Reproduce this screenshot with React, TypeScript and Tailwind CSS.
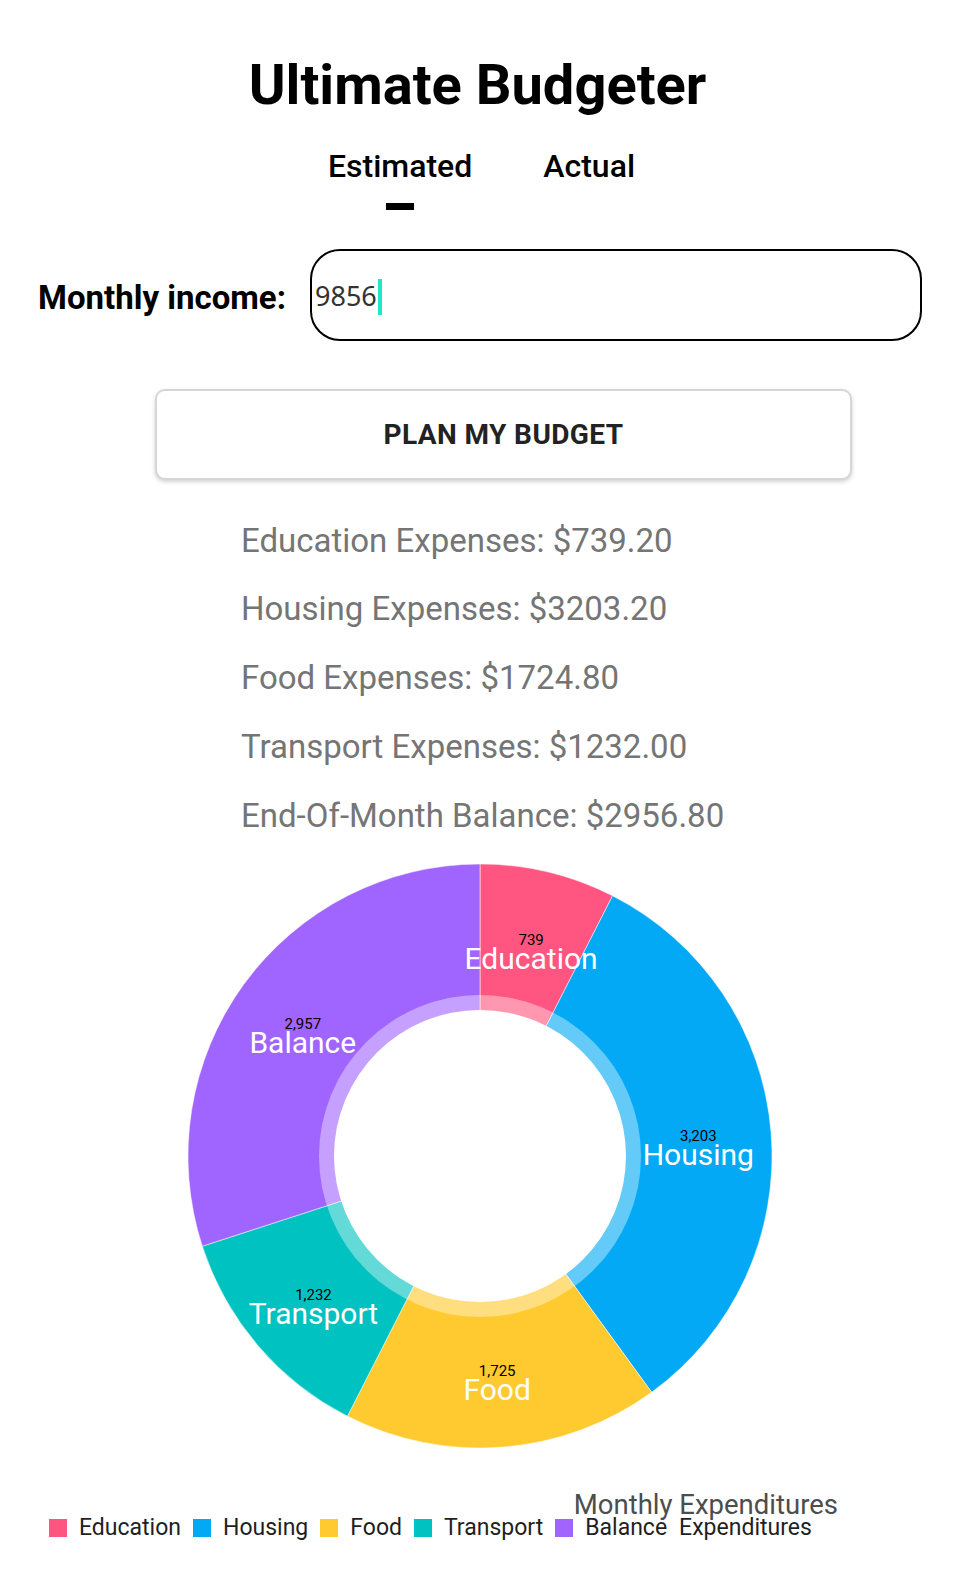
import { useState } from "react";

const SLICES = [
  { label: "Education", value: 739.2, color: "#ff5580" },
  { label: "Housing", value: 3203.2, color: "#03a9f4" },
  { label: "Food", value: 1724.8, color: "#ffca30" },
  { label: "Transport", value: 1232, color: "#00c2c0" },
  { label: "Balance", value: 2956.8, color: "#a165ff" },
];

const CX = 480;
const CY = 306;
const R = 292;
const HOLE = 146;
const RING = 161;

function pt(r: number, deg: number) {
  const a = (deg * Math.PI) / 180;
  return [CX + r * Math.sin(a), CY - r * Math.cos(a)];
}

function slicePath(start: number, end: number) {
  const [x1, y1] = pt(R, start);
  const [x2, y2] = pt(R, end);
  const large = end - start > 180 ? 1 : 0;
  return `M ${CX} ${CY} L ${x1} ${y1} A ${R} ${R} 0 ${large} 1 ${x2} ${y2} Z`;
}

function PieChart() {
  const total = SLICES.reduce((s, d) => s + d.value, 0);
  let angle = 0;
  const parts = SLICES.map((d) => {
    const sweep = (d.value / total) * 360;
    const start = angle;
    angle += sweep;
    return { ...d, start, end: angle, mid: start + sweep / 2 };
  });

  return (
    <svg width="955" height="608" viewBox="0 0 955 608" className="block">
      {parts.map((p) => (
        <path
          key={p.label}
          d={slicePath(p.start, p.end)}
          fill={p.color}
          stroke="#ffffff"
          strokeOpacity={0.5}
          strokeWidth={1}
        />
      ))}
      <circle cx={CX} cy={CY} r={RING} fill="#ffffff" fillOpacity={0.39} />
      <circle cx={CX} cy={CY} r={HOLE} fill="#ffffff" />
      {parts.map((p) => {
        const [x, y] = pt((R + HOLE) / 2, p.mid);
        return (
          <g key={p.label + "-t"} fontFamily="Roboto, sans-serif" textAnchor="middle">
            <text x={x} y={y + 2} fontSize="15" fill="#000000">
              {Math.round(p.value).toLocaleString("en-US")}
            </text>
            <text x={x} y={y + 26} fontSize="30" fill="#ffffff">
              {p.label}
            </text>
          </g>
        );
      })}
    </svg>
  );
}

export default function App() {
  const [income, setIncome] = useState("9856");
  const [tab, setTab] = useState("estimated");

  const lines = [
    "Education Expenses: $739.20",
    "Housing Expenses: $3203.20",
    "Food Expenses: $1724.80",
    "Transport Expenses: $1232.00",
    "End-Of-Month Balance: $2956.80",
  ];

  return (
    <div className="w-[955px] min-h-[1593px] bg-white font-['Roboto',sans-serif] text-black">
      <h1 className="pt-[57px] text-center text-[56px] font-bold leading-[56px]">
        Ultimate Budgeter
      </h1>

      {/* tabs */}
      <div className="mt-[37px] flex justify-center gap-[71px] pl-[8px]">
        <button onClick={() => setTab("estimated")} className="flex flex-col items-center">
          <span className="text-[32px] font-medium leading-[32px]">Estimated</span>
          <span
            className={`mt-[21px] h-[7px] w-[28px] ${tab === "estimated" ? "bg-black" : "bg-transparent"}`}
          />
        </button>
        <button onClick={() => setTab("actual")} className="flex flex-col items-center">
          <span className="text-[32px] font-medium leading-[32px]">Actual</span>
          <span
            className={`mt-[21px] h-[7px] w-[28px] ${tab === "actual" ? "bg-black" : "bg-transparent"}`}
          />
        </button>
      </div>

      {/* income */}
      <div className="mt-[39px] flex items-center pl-[38px]">
        <label className="w-[272px] pt-[4px] text-[33px] font-bold leading-none">Monthly income:</label>
        <div className="flex h-[92px] w-[612px] items-center rounded-[30px] border-2 border-black pl-[3px] pt-[3px]">
          <span className="font-['Noto_Sans',sans-serif] text-[27px] text-[#333333]">{income}</span>
          <span className="ml-[1px] h-[36px] w-[4px] bg-[#1de9c6]" />
          <input
            value=""
            onChange={(e) => setIncome(income + e.target.value)}
            className="h-full flex-1 bg-transparent outline-none"
          />
        </div>
      </div>

      {/* button */}
      <div className="mt-[48px] pl-[155px]">
        <button className="h-[91px] w-[697px] rounded-[10px] border-2 border-[#d6d6d6] bg-white text-[28px] font-bold tracking-[0.4px] text-[#222222] shadow-[0_2px_4px_rgba(0,0,0,0.18)]">
          PLAN MY BUDGET
        </button>
      </div>

      {/* results */}
      <div className="mt-[26px] flex flex-col pl-[241px]">
        {lines.map((l) => (
          <div key={l} className="flex h-[68.75px] items-center text-[33px] text-[#757575]">
            {l}
          </div>
        ))}
      </div>

      {/* chart */}
      <div className="relative">
        <PieChart />
        <span className="absolute right-[117px] top-[641px] text-[27.5px] leading-[28px] text-[#4d4d4d]">
          Monthly Expenditures
        </span>
        <div className="mt-[58px] flex h-[24px] items-center pl-[49px] text-[23px] leading-[24px] text-[#1f1f1f]">
          {SLICES.map((s) => (
            <div key={s.label} className="mr-[12px] flex items-center">
              <span className="mr-[12px] h-[18px] w-[18px]" style={{ backgroundColor: s.color }} />
              <span>{s.label}</span>
            </div>
          ))}
          <span>Expenditures</span>
        </div>
      </div>
    </div>
  );
}
